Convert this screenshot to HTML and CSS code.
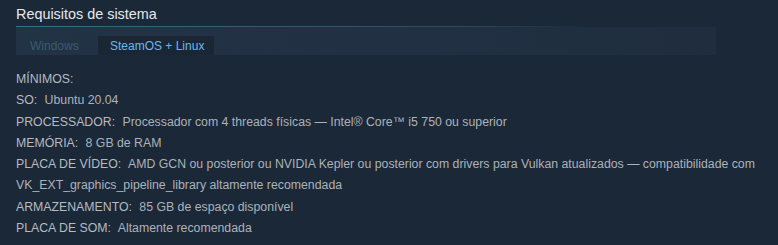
FILE: index.html
```html
<!DOCTYPE html>
<html lang="pt-BR">

<head>
  <meta charset="UTF-8" />
  <title>Requisitos de sistema</title>
  <link rel="stylesheet" href="styles.css">
</head>

<body>
  <div class="sysreq">
    <h2 class="sysreq-title">Requisitos de sistema</h2>

    <div class="sysreq-tabs">
      <div class="sysreq-tab">Windows</div>
      <div class="sysreq-tab active">SteamOS + Linux</div>
    </div>

    <ul class="sysreq-list">
      <li><strong>MÍNIMOS:</strong></li>
      <li><strong>SO:</strong> Ubuntu 20.04</li>
      <li><strong>PROCESSADOR:</strong> Processador com 4 threads físicas — Intel® Core™ i5 750 ou superior</li>
      <li><strong>MEMÓRIA:</strong> 8 GB de RAM</li>
      <li><strong>PLACA DE VÍDEO:</strong> AMD GCN ou posterior ou NVIDIA Kepler ou posterior com drivers para Vulkan atualizados — compatibilidade com VK_EXT_graphics_pipeline_library altamente recomendada</li>
      <li><strong>ARMAZENAMENTO:</strong> 85 GB de espaço disponível</li>
      <li><strong>PLACA DE SOM:</strong> Altamente recomendada</li>
    </ul>
  </div>
</body>

</html>
```

FILE: styles.css
```css
* {
  box-sizing: border-box;
}

body {
  margin: 0;
  background: #1b2838;
  font-family: Arial, "Liberation Sans", sans-serif;
}

.sysreq {
  padding: 6px 8px 0 16px;
}

.sysreq-title {
  margin: 0;
  padding-bottom: 4px;
  font-size: 14.4px;
  font-weight: normal;
  line-height: 17px;
  color: #e6e9ec;
  background: linear-gradient(to right, #3b6e8c 0%, #2a4a60 60%, rgba(27, 40, 56, 0) 76%) no-repeat left bottom / 100% 1px;
}

/* faixa das abas */
.sysreq-tabs {
  display: flex;
  align-items: flex-end;
  width: 700px;
  height: 28px;
  background: linear-gradient(to right, #223345 0%, #213143 50%, #1f2d3e 100%);
}

.sysreq-tab {
  height: 19px;
  padding: 1px 15px 0;
  font-size: 12px;
  line-height: 19px;
  color: #3d5a70;
  white-space: nowrap;
}

.sysreq-tab:first-child {
  width: 82px;
  padding-left: 14px;
}

.sysreq-tab.active {
  width: 116px;
  padding-left: 12px;
  background: #1b2634;
  color: #67b9ec;
}

.sysreq-list {
  list-style: none;
  margin: 14px 0 0 0;
  padding: 0;
  font-size: 12.3px;
  line-height: 21.3px;
  color: #acb2b8;
}

.sysreq-list strong {
  font-weight: normal;
  color: #b6bbc0;
  margin-right: 4px;
}
```
